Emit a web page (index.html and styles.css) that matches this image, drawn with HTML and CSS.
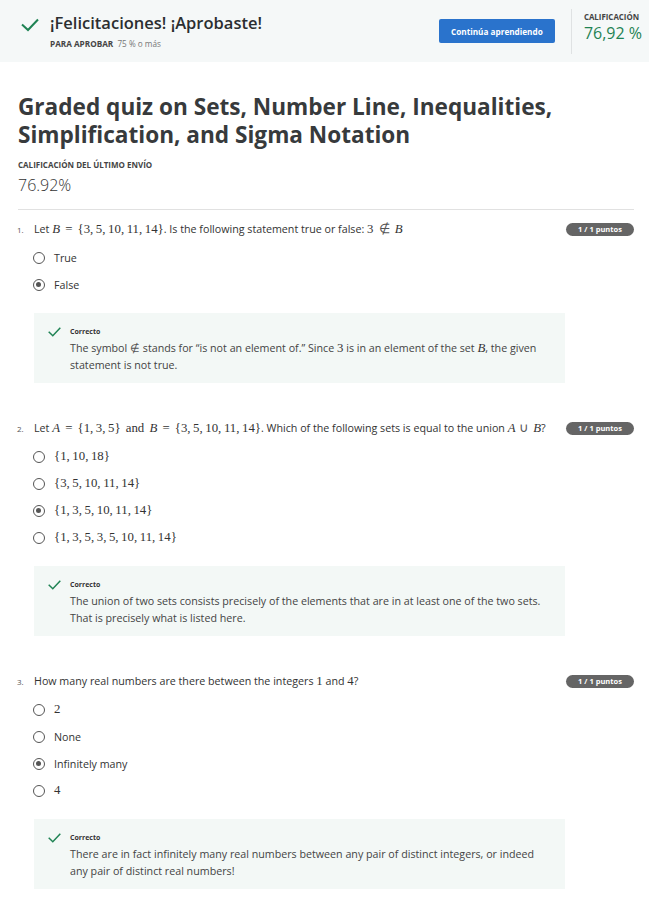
FILE: index.html
```html
<!DOCTYPE html>
<html lang="es">
<head>
<meta charset="utf-8">
<title>Graded quiz</title>
<link rel="stylesheet" href="styles.css">
</head>
<body>
<header class="banner">
  <div class="pass">
    <svg class="pass-icon" width="18" height="14" viewBox="0 0 18 14"><polyline points="1,6.5 7,12 17,1.5" fill="none" stroke="#1f8354" stroke-width="2"/></svg>
    <div class="pass-text">
      <div class="pass-title">¡Felicitaciones! ¡Aprobaste!</div>
      <div class="pass-sub"><b>PARA APROBAR</b> <span>75 % o más</span></div>
    </div>
  </div>
  <button class="cta">Continúa aprendiendo</button>
  <div class="vdiv"></div>
  <div class="grade">
    <div class="grade-label">CALIFICACIÓN</div>
    <div class="grade-value">76,92 %</div>
  </div>
</header>

<main class="content">
  <h1 class="title">Graded quiz on Sets, Number Line, Inequalities, Simplification, and Sigma Notation</h1>
  <div class="last-label">CALIFICACIÓN DEL ÚLTIMO ENVÍO</div>
  <div class="last-value">76.92%</div>
  <hr class="sep">

  <section class="q">
    <div class="q-head">
      <span class="q-num">1.</span>
      <div class="q-text">Let <span class="m"><i>B</i><span class="rel">=</span>{3,&thinsp;5,&thinsp;10,&thinsp;11,&thinsp;14}</span>. Is the following statement true or false: <span class="m">3<span class="rel sym">∉</span><i>B</i></span></div>
      <span class="badge">1 / 1 puntos</span>
    </div>
    <ul class="opts">
      <li class="opt"><span class="radio"></span>True</li>
      <li class="opt"><span class="radio on"></span>False</li>
    </ul>
    <div class="fb">
      <svg class="fb-icon" width="13" height="10" viewBox="0 0 13 10"><polyline points="0.7,4.8 4.8,8.8 12.3,0.8" fill="none" stroke="#1f8354" stroke-width="1.5"/></svg>
      <div class="fb-body">
        <div class="fb-title">Correcto</div>
        <div class="fb-text">The symbol <span class="m sym">∉</span> stands for “is not an element of.” Since <span class="m">3</span> is in an element of the set <span class="m"><i>B</i></span>, the given statement is not true.</div>
      </div>
    </div>
  </section>

  <section class="q">
    <div class="q-head">
      <span class="q-num">2.</span>
      <div class="q-text">Let <span class="m"><i>A</i><span class="rel">=</span>{1,&thinsp;3,&thinsp;5}<span class="word">and</span><i>B</i><span class="rel">=</span>{3,&thinsp;5,&thinsp;10,&thinsp;11,&thinsp;14}</span>. Which of the following sets is equal to the union <span class="m"><i>A</i><span class="bin sym">∪</span><i>B</i></span>?</div>
      <span class="badge">1 / 1 puntos</span>
    </div>
    <ul class="opts">
      <li class="opt"><span class="radio"></span><span class="m">{1,&thinsp;10,&thinsp;18}</span></li>
      <li class="opt"><span class="radio"></span><span class="m">{3,&thinsp;5,&thinsp;10,&thinsp;11,&thinsp;14}</span></li>
      <li class="opt"><span class="radio on"></span><span class="m">{1,&thinsp;3,&thinsp;5,&thinsp;10,&thinsp;11,&thinsp;14}</span></li>
      <li class="opt"><span class="radio"></span><span class="m">{1,&thinsp;3,&thinsp;5,&thinsp;3,&thinsp;5,&thinsp;10,&thinsp;11,&thinsp;14}</span></li>
    </ul>
    <div class="fb">
      <svg class="fb-icon" width="13" height="10" viewBox="0 0 13 10"><polyline points="0.7,4.8 4.8,8.8 12.3,0.8" fill="none" stroke="#1f8354" stroke-width="1.5"/></svg>
      <div class="fb-body">
        <div class="fb-title">Correcto</div>
        <div class="fb-text">The union of two sets consists precisely of the elements that are in at least one of the two sets. That is precisely what is listed here.</div>
      </div>
    </div>
  </section>

  <section class="q">
    <div class="q-head">
      <span class="q-num">3.</span>
      <div class="q-text">How many real numbers are there between the integers <span class="m">1</span> and <span class="m">4</span>?</div>
      <span class="badge">1 / 1 puntos</span>
    </div>
    <ul class="opts">
      <li class="opt"><span class="radio"></span><span class="m">2</span></li>
      <li class="opt"><span class="radio"></span>None</li>
      <li class="opt"><span class="radio on"></span>Infinitely many</li>
      <li class="opt"><span class="radio"></span><span class="m">4</span></li>
    </ul>
    <div class="fb">
      <svg class="fb-icon" width="13" height="10" viewBox="0 0 13 10"><polyline points="0.7,4.8 4.8,8.8 12.3,0.8" fill="none" stroke="#1f8354" stroke-width="1.5"/></svg>
      <div class="fb-body">
        <div class="fb-title">Correcto</div>
        <div class="fb-text">There are in fact infinitely many real numbers between any pair of distinct integers, or indeed any pair of distinct real numbers!</div>
      </div>
    </div>
  </section>
</main>
</body>
</html>
```

FILE: styles.css
```css
* { box-sizing: border-box; }
html, body { margin: 0; padding: 0; background: #fff; }
body {
  font-family: "Open Sans", "Noto Sans", sans-serif;
  color: #373a3c;
  width: 649px;
  overflow: hidden;
}

/* Banner */
.banner {
  display: flex;
  align-items: center;
  height: 62px;
  background: #f5f8f8;
  padding: 0 7px 0 21px;
}
.pass { display: flex; align-items: flex-start; gap: 11px; }
.pass-icon { margin-top: 5px; flex: none; }
.pass-title {
  font-size: 16.5px;
  font-weight: 600;
  line-height: 20px;
  color: #2b2e30;
}
.pass-sub {
  margin-top: 5px;
  font-size: 8.2px;
  line-height: 12px;
  color: #555;
}
.pass-sub b { font-weight: 700; color: #444; margin-right: 2px; }
.pass-sub span { color: #777; }

.cta {
  margin-left: auto;
  width: 116px;
  height: 24px;
  border: 0;
  border-radius: 2px;
  background: #2a73cc;
  color: #fff;
  font-family: "Open Sans", sans-serif;
  font-size: 8.2px;
  font-weight: 700;
  padding: 0;
}
.vdiv {
  width: 1px;
  height: 45px;
  background: #dfe2e3;
  margin: 0 12px 0 16px;
}
.grade { align-self: flex-start; padding-top: 12px; }
.grade-label {
  font-size: 7.9px;
  font-weight: 700;
  line-height: 11px;
  color: #444;
}
.grade-value {
  font-size: 16px;
  line-height: 20px;
  color: #1f8354;
}

/* Content */
.content { padding: 31px 15px 40px 18px; }
.title {
  margin: 0;
  font-size: 22.6px;
  line-height: 28px;
  font-weight: 700;
  color: #373a3c;
}
.last-label {
  margin-top: 11px;
  font-size: 8px;
  font-weight: 700;
  line-height: 10px;
  color: #444;
}
.last-value {
  margin-top: 4px;
  font-size: 16px;
  font-weight: 300;
  line-height: 22px;
  color: #333;
}
.sep {
  margin: 13px 0 0 0;
  border: 0;
  border-top: 1px solid #e1e1e1;
}

.q { margin-top: 9px; margin-bottom: 35px; }
.q-head {
  display: flex;
  align-items: center;
  height: 20px;
}
.q-num {
  width: 17px;
  flex: none;
  margin-left: -1px;
  font-size: 8px;
  color: #555;
}
.q-text {
  flex: 1;
  font-size: 10.7px;
  color: #333;
  white-space: nowrap;
}
.badge {
  flex: none;
  width: 68px;
  height: 13px;
  border-radius: 7px;
  background: #656565;
  color: #fff;
  font-size: 7.5px;
  font-weight: 700;
  line-height: 13px;
  text-align: center;
}

.m {
  font-family: "Liberation Serif", "DejaVu Serif", serif;
  font-size: 1.2em;
  line-height: 1;
  color: #333;
}
.m i { font-style: italic; }
.sym {
  font-family: "DejaVu Sans", sans-serif;
  font-weight: 200;
  color: #555;
}
.m.sym { font-size: 1.05em; }
.rel { margin: 0 0.4em; }
.bin { margin: 0 0.3em; }
.word { margin: 0 0.4em; }

.opts { list-style: none; margin: 0; padding: 5px 0 0 0; }
.opt {
  display: flex;
  align-items: center;
  height: 27px;
  padding-left: 15px;
  font-size: 10.7px;
  color: #333;
}
.radio {
  width: 12px;
  height: 12px;
  border: 1.3px solid #555;
  border-radius: 50%;
  margin-right: 9px;
  flex: none;
  position: relative;
}
.radio.on::after {
  content: "";
  position: absolute;
  left: 2px; top: 2px;
  width: 5.4px; height: 5.4px;
  border-radius: 50%;
  background: #555;
}

.fb {
  display: flex;
  align-items: flex-start;
  gap: 9px;
  margin: 15px 0 0 16px;
  width: 531px;
  min-height: 70px;
  background: #f3f8f6;
  padding: 12px 18px 9px 14px;
}
.fb-icon { margin-top: 2px; flex: none; }
.fb-title {
  font-size: 7px;
  font-weight: 700;
  line-height: 13px;
  color: #333;
}
.fb-text {
  margin-top: 2px;
  font-size: 10.7px;
  line-height: 17px;
  color: #444;
}
.fb-text .m { font-size: 1.2em; }
.fb-text .m.sym { font-size: 1.05em; }
```
